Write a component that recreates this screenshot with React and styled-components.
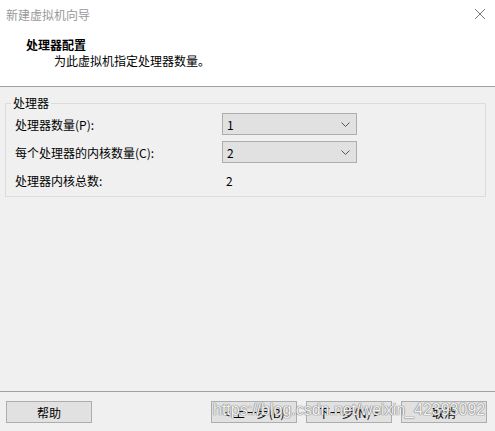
import styled, { createGlobalStyle } from 'styled-components';

const GlobalStyle = createGlobalStyle`
  body {
    margin: 0;
    background: #f0f0f0;
    font-family: 'Noto Sans CJK SC', 'Liberation Sans', sans-serif;
    font-size: 12px;
    color: #000;
  }
`;

const Window = styled.div`
  position: relative;
  width: 495px;
  height: 431px;
  display: flex;
  flex-direction: column;
  background: #f0f0f0;
  overflow: hidden;
`;

const Header = styled.div`
  height: 86px;
  background: #fff;
  border-bottom: 1px solid #a0a0a0;
  display: flex;
  flex-direction: column;
`;

const TitleBar = styled.div`
  height: 28px;
  display: flex;
  align-items: center;
  justify-content: space-between;
  padding: 0 9px 0 6px;
  color: #999;
  font-size: 12px;
`;

const CloseIcon = styled.svg`
  width: 12px;
  height: 12px;
`;

const PageTitle = styled.div`
  margin: 9px 0 0 26px;
  font-weight: 700;
  line-height: 16px;
`;

const PageSubtitle = styled.div`
  margin: 0 0 0 54px;
  line-height: 16px;
`;

const Content = styled.div`
  flex: 1;
  padding: 9px 9px 0 5px;
`;

const GroupBox = styled.fieldset`
  margin: 0;
  padding: 0 9px 2px 9px;
  border: 1px solid #dcdcdc;
  border-radius: 0;
`;

const Legend = styled.legend`
  margin-left: -4px;
  padding: 0 2px;
  line-height: 14px;
`;

const Grid = styled.div`
  display: grid;
  grid-template-columns: 207px 135px;
  grid-auto-rows: 28px;
  align-items: center;
`;

const Select = styled.div`
  height: 22px;
  box-sizing: border-box;
  border: 1px solid #adadad;
  background: #e1e1e1;
  display: flex;
  align-items: center;
  justify-content: space-between;
  padding: 0 6px 0 4px;
`;

const Value = styled.div`
  padding-left: 4px;
`;

const Footer = styled.div`
  height: 40px;
  border-top: 1px solid #a0a0a0;
  display: flex;
  align-items: flex-start;
  padding: 9px 8px 0 6px;
  box-sizing: border-box;
  gap: 9px;
`;

const Button = styled.button`
  width: 86px;
  height: 22px;
  border: 1px solid #adadad;
  background: #e1e1e1;
  font-family: inherit;
  font-size: 12px;
  color: #000;
  padding: 0;
  margin-left: ${(p) => (p.$push ? 'auto' : '0')};
`;

const Watermark = styled.div`
  position: absolute;
  left: 213px;
  top: 401px;
  font-family: 'Liberation Sans', sans-serif;
  font-size: 16px;
  color: rgba(255, 255, 255, 0.92);
  text-shadow: 0 0 1px #777, 0 0 1px #777, 0 0 1px #999;
  pointer-events: none;
  white-space: nowrap;
`;

const Chevron = () => (
  <svg width="9" height="5" viewBox="0 0 9 5">
    <path d="M0.5 0.5 L4.5 4.5 L8.5 0.5" fill="none" stroke="#555" strokeWidth="1" />
  </svg>
);

const rows = [
  { label: '处理器数量(P):', value: '1', select: true },
  { label: '每个处理器的内核数量(C):', value: '2', select: true },
  { label: '处理器内核总数:', value: '2', select: false },
];

export default function App() {
  return (
    <>
      <GlobalStyle />
      <Window>
        <Header>
          <TitleBar>
            <span>新建虚拟机向导</span>
            <CloseIcon viewBox="0 0 12 12">
              <path d="M1 1 L11 11 M11 1 L1 11" stroke="#777" strokeWidth="1" />
            </CloseIcon>
          </TitleBar>
          <PageTitle>处理器配置</PageTitle>
          <PageSubtitle>为此虚拟机指定处理器数量。</PageSubtitle>
        </Header>
        <Content>
          <GroupBox>
            <Legend>处理器</Legend>
            <Grid>
              {rows.map((r) => (
                <>
                  <div key={r.label}>{r.label}</div>
                  {r.select ? (
                    <Select>
                      <span>{r.value}</span>
                      <Chevron />
                    </Select>
                  ) : (
                    <Value>{r.value}</Value>
                  )}
                </>
              ))}
            </Grid>
          </GroupBox>
        </Content>
        <Footer>
          <Button>帮助</Button>
          <Button $push>&lt; 上一步(B)</Button>
          <Button>下一步(N) &gt;</Button>
          <Button>取消</Button>
        </Footer>
        <Watermark>https://blog.csdn.net/weixin_42393092</Watermark>
      </Window>
    </>
  );
}
